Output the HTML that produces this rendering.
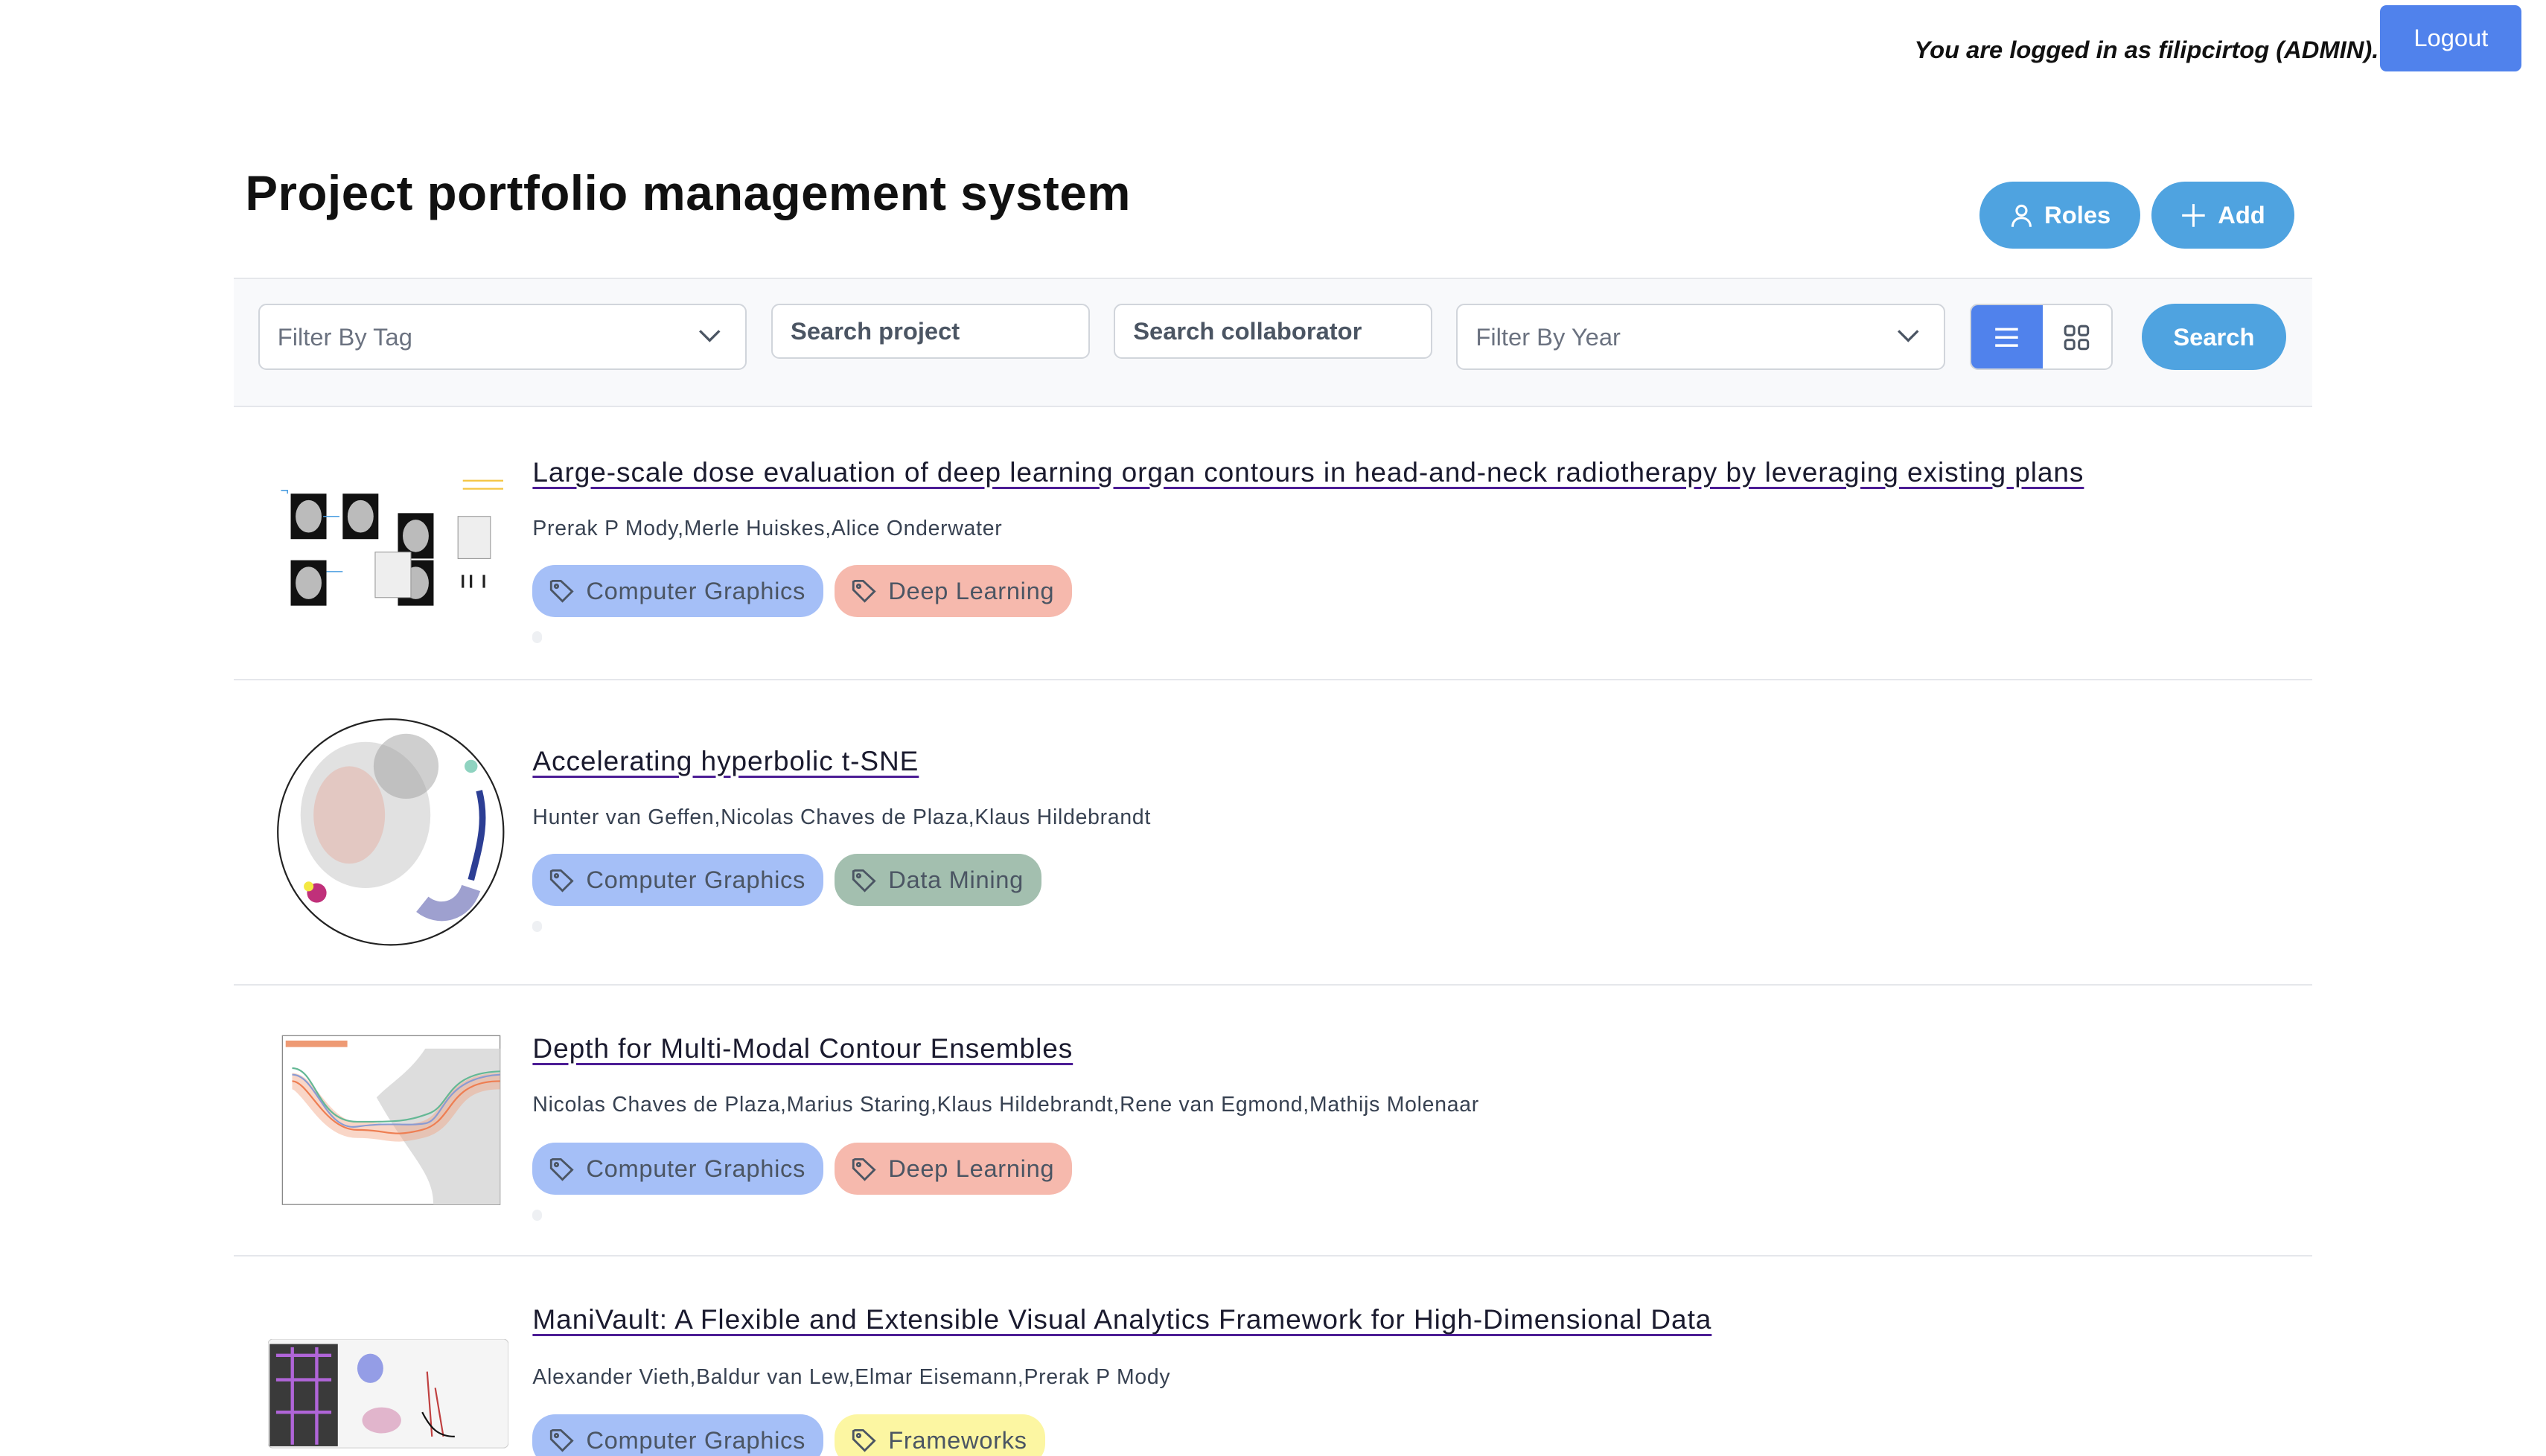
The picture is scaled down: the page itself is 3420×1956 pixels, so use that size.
<!DOCTYPE html>
<html><head><meta charset="utf-8"><style>
html,body{margin:0;padding:0;background:#fff;overflow:hidden}
#w{position:relative;width:1568px;height:897px;zoom:2.1811;font-family:"Liberation Sans",sans-serif;color:#111}
.a{position:absolute}
.btn{background:#4fa3e0;color:#fff;border-radius:21px;font-weight:bold;font-size:15px;display:flex;align-items:center;justify-content:center}
.inp{background:#fff;border:1px solid #d1d5db;border-radius:5px;box-sizing:border-box;font-size:15px;color:#6b7280;display:flex;align-items:center;padding-left:11px}
.title{font-size:17px;letter-spacing:0.42px;color:#1a1a2e;text-decoration:underline;text-decoration-color:#4c1d95;text-underline-offset:3px;white-space:nowrap}
.auth{font-size:13px;letter-spacing:0.35px;color:#374151;white-space:nowrap}
.tag{height:32px;border-radius:14px;font-size:15px;letter-spacing:0.3px;color:#4b5563;display:inline-flex;align-items:center;padding:0 11px 0 10px;margin-right:7px;box-sizing:border-box}
.tag svg{margin-right:7px}
.dot{width:6px;height:7px;border-radius:3px;background:#eef0f3}
.sep{left:144px;width:1280px;height:1px;background:#e5e7eb}
</style></head><body><div id="w">
<div class="a" style="right:103px;top:22px;font-size:15px;font-weight:bold;font-style:italic;white-space:nowrap">You are logged in as filipcirtog (ADMIN).</div>
<div class="a" style="left:1466px;top:3px;width:87px;height:41px;background:#5082ec;border-radius:4px;color:#fff;font-size:15px;display:flex;align-items:center;justify-content:center">Logout</div>
<div class="a" style="left:151px;top:102px;font-size:30px;letter-spacing:0.25px;font-weight:bold;white-space:nowrap">Project portfolio management system</div>
<div class="a btn" style="left:1219px;top:112px;width:99px;height:41px"><svg width="16" height="16" viewBox="0 0 16 16" style="margin-right:6px" fill="none" stroke="#fff" stroke-width="1.4"><circle cx="8" cy="5" r="3"/><path d="M2.5 15c0-3.5 2.5-5.5 5.5-5.5s5.5 2 5.5 5.5"/></svg>Roles</div>
<div class="a btn" style="left:1325px;top:112px;width:88px;height:41px"><svg width="16" height="16" viewBox="0 0 16 16" style="margin-right:7px" stroke="#fff" stroke-width="1.4"><path d="M8 1v14M1 8h14"/></svg>Add</div>
<div class="a" style="left:144px;top:171px;width:1280px;height:80px;background:#f8f9fb;border-top:1px solid #e5e7eb;border-bottom:1px solid #e5e7eb;box-sizing:border-box"></div>
<div class="a inp" style="left:159px;top:187px;width:301px;height:41px">Filter By Tag<svg class="a" style="right:15px;top:14px" width="14" height="10" viewBox="0 0 14 10" fill="none" stroke="#4b5563" stroke-width="1.5"><path d="M1 2l6 6 6-6"/></svg></div>
<div class="a inp" style="left:475px;top:187px;width:196px;height:34px;font-weight:bold;color:#4b5563">Search project</div>
<div class="a inp" style="left:686px;top:187px;width:196px;height:34px;font-weight:bold;color:#4b5563">Search collaborator</div>
<div class="a inp" style="left:897px;top:187px;width:301px;height:41px">Filter By Year<svg class="a" style="right:15px;top:14px" width="14" height="10" viewBox="0 0 14 10" fill="none" stroke="#4b5563" stroke-width="1.5"><path d="M1 2l6 6 6-6"/></svg></div>
<div class="a" style="left:1213px;top:187px;width:88px;height:41px;border:1px solid #d1d5db;border-radius:5px;background:#fff;box-sizing:border-box;overflow:hidden">
<div class="a" style="left:0;top:0;width:44px;height:41px;background:#5082ec"></div>
<svg class="a" style="left:14px;top:13px" width="16" height="14" viewBox="0 0 16 14" stroke="#fff" stroke-width="1.6"><path d="M1 2h14M1 7h14M1 12h14"/></svg>
<svg class="a" style="left:57px;top:12px" width="16" height="16" viewBox="0 0 16 16" fill="none" stroke="#4b5563" stroke-width="1.4"><rect x="1" y="1" width="5.5" height="5.5" rx="1.5"/><rect x="9.5" y="1" width="5.5" height="5.5" rx="1.5"/><rect x="1" y="9.5" width="5.5" height="5.5" rx="1.5"/><rect x="9.5" y="9.5" width="5.5" height="5.5" rx="1.5"/></svg></div>
<div class="a btn" style="left:1319px;top:187px;width:89px;height:41px">Search</div>

<!-- item 1 -->
<svg class="a" style="left:165px;top:292px" width="145" height="84" viewBox="0 0 145 84"><g fill="#111"><rect x="14" y="12" width="22" height="28"/><rect x="46" y="12" width="22" height="28"/><rect x="80" y="24" width="22" height="28"/><rect x="14" y="53" width="22" height="28"/><rect x="80" y="53" width="22" height="28"/></g><g fill="#bbb"><ellipse cx="25" cy="26" rx="8" ry="10"/><ellipse cx="57" cy="26" rx="8" ry="10"/><ellipse cx="91" cy="38" rx="8" ry="10"/><ellipse cx="25" cy="67" rx="8" ry="10"/><ellipse cx="91" cy="67" rx="8" ry="10"/></g><rect x="117" y="26" width="20" height="26" fill="#eee" stroke="#999" stroke-width=".5"/><rect x="66" y="48" width="22" height="28" fill="#eee" stroke="#999" stroke-width=".5"/><path d="M8 10h4v2M36 60h10M34 26h10" stroke="#4a9de0" stroke-width=".7" fill="none"/><path d="M120 4h30M120 9h25" stroke="#f4c542" stroke-width="1"/><path d="M120 62v8M125 62v8M133 62v8" stroke="#222" stroke-width="1.5"/></svg>
<div class="a title" style="left:328px;top:281px">Large-scale dose evaluation of deep learning organ contours in head-and-neck radiotherapy by leveraging existing plans</div>
<div class="a auth" style="left:328px;top:318px">Prerak P Mody,Merle Huiskes,Alice Onderwater</div>
<div class="a" style="left:328px;top:348px;display:flex"><span class="tag" style="background:#a5bff7">TAGICON Computer Graphics</span><span class="tag" style="background:#f6b9ad">TAGICON Deep Learning</span></div>
<div class="a dot" style="left:328px;top:389px"></div>
<div class="a sep" style="top:418px"></div>

<!-- item 2 -->
<svg class="a" style="left:170px;top:442px" width="141" height="141" viewBox="0 0 141 141"><circle cx="70.5" cy="70.5" r="69.5" fill="#fff" stroke="#222" stroke-width="1"/><ellipse cx="55" cy="60" rx="40" ry="45" fill="#c8c8c8" opacity=".55"/><ellipse cx="45" cy="60" rx="22" ry="30" fill="#e79a8a" opacity=".35"/><path d="M90 115c10 8 25 5 30-10" stroke="#9ea0cf" stroke-width="12" fill="none"/><path d="M125 45c5 20 0 35-5 55" stroke="#2c3e94" stroke-width="4" fill="none"/><circle cx="25" cy="108" r="6" fill="#c0307a"/><circle cx="20" cy="104" r="3" fill="#f4e842"/><circle cx="80" cy="30" r="20" fill="#a0a0a0" opacity=".5"/><circle cx="120" cy="30" r="4" fill="#8fd3c0"/></svg>
<div class="a title" style="left:328px;top:459px">Accelerating hyperbolic t-SNE</div>
<div class="a auth" style="left:328px;top:496px">Hunter van Geffen,Nicolas Chaves de Plaza,Klaus Hildebrandt</div>
<div class="a" style="left:328px;top:526px;display:flex"><span class="tag" style="background:#a5bff7">TAGICON Computer Graphics</span><span class="tag" style="background:#a3bfaf">TAGICON Data Mining</span></div>
<div class="a dot" style="left:328px;top:567px"></div>
<div class="a sep" style="top:606px"></div>

<!-- item 3 -->
<svg class="a" style="left:172px;top:636px" width="138" height="110" viewBox="0 0 138 110"><rect x="2" y="2" width="134" height="104" fill="#fff" stroke="#888" stroke-width=".6"/><path d="M60 40c10-10 20-15 30-30h46v96H95c0-20-15-30-35-66z" fill="#ddd"/><path d="M8 30c10 0 20 30 40 30s20 5 40 0 15-30 48-30" stroke="#f2a383" stroke-width="10" fill="none" opacity=".45"/><path d="M8 30c10 0 20 30 40 30s20 5 40 0 15-30 48-30" stroke="#ee7e52" stroke-width="1" fill="none"/><path d="M8 22c15 0 15 33 40 33s30 0 44-5 10-25 44-26" stroke="#64b895" stroke-width="1" fill="none"/><path d="M8 26c15 0 20 35 40 32s30 0 42-2 10-28 46-30" stroke="#8a9bd2" stroke-width="1" fill="none"/><rect x="4" y="5" width="38" height="4" fill="#ee9a74"/></svg>
<div class="a title" style="left:328px;top:636px">Depth for Multi-Modal Contour Ensembles</div>
<div class="a auth" style="left:328px;top:673px">Nicolas Chaves de Plaza,Marius Staring,Klaus Hildebrandt,Rene van Egmond,Mathijs Molenaar</div>
<div class="a" style="left:328px;top:704px;display:flex"><span class="tag" style="background:#a5bff7">TAGICON Computer Graphics</span><span class="tag" style="background:#f6b9ad">TAGICON Deep Learning</span></div>
<div class="a dot" style="left:328px;top:745px"></div>
<div class="a sep" style="top:773px"></div>

<!-- item 4 -->
<svg class="a" style="left:165px;top:825px" width="148" height="67" viewBox="0 0 148 67"><rect x="0" y="0" width="148" height="67" fill="#f5f5f5" stroke="#ccc" stroke-width=".5" rx="3"/><rect x="1" y="3" width="42" height="63" fill="#3a3a3a"/><path d="M5 10h34M5 25h34M5 45h34M15 5v60M30 5v60" stroke="#b065d8" stroke-width="2"/><ellipse cx="63" cy="18" rx="8" ry="9" fill="#6b78e0" opacity=".7"/><ellipse cx="70" cy="50" rx="12" ry="8" fill="#d38ab0" opacity=".6"/><path d="M98 20l3 40M103 30l5 30" stroke="#c04040" stroke-width="1"/><path d="M95 45c5 10 10 15 20 15" stroke="#111" stroke-width="1" fill="none"/></svg>
<div class="a title" style="left:328px;top:803px">ManiVault: A Flexible and Extensible Visual Analytics Framework for High-Dimensional Data</div>
<div class="a auth" style="left:328px;top:841px">Alexander Vieth,Baldur van Lew,Elmar Eisemann,Prerak P Mody</div>
<div class="a" style="left:328px;top:871px;display:flex"><span class="tag" style="background:#a5bff7">TAGICON Computer Graphics</span><span class="tag" style="background:#fcf6a2">TAGICON Frameworks</span></div>
</div>
<script>
var ic='<svg width="16" height="16" viewBox="0 0 16 16" fill="none" stroke="#4b5563" stroke-width="1.3"><path d="M1.5 2.5v5l7 7 6-6-7-6.5h-5z"/><circle cx="4.8" cy="5.3" r="1"/></svg>';
document.querySelectorAll('.tag').forEach(function(t){t.innerHTML=t.innerHTML.replace('TAGICON',ic);});
</script>
</body></html>
